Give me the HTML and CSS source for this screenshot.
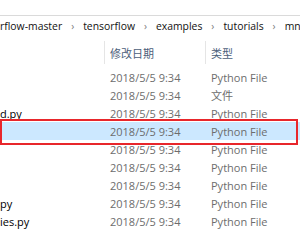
FILE: index.html
```html
<!DOCTYPE html>
<html lang="zh-CN">
<head>
<meta charset="utf-8">
<link rel="stylesheet" href="styles.css">
</head>
<body>
<div class="window">
  <div class="ribbon"></div>
  <div class="address">
    <span class="crumb first">rflow-master</span>
    <span class="chev">›</span>
    <span class="crumb">tensorflow</span>
    <span class="chev">›</span>
    <span class="crumb">examples</span>
    <span class="chev">›</span>
    <span class="crumb">tutorials</span>
    <span class="chev">›</span>
    <span class="crumb">mnist</span>
  </div>
  <div class="list-header">
    <div class="hcell name"></div>
    <div class="hcell">修改日期</div>
    <div class="hcell">类型</div>
  </div>
  <div class="rows">
    <div class="row"><span class="name"></span><span class="date">2018/5/5 9:34</span><span class="type">Python File</span></div>
    <div class="row"><span class="name"></span><span class="date">2018/5/5 9:34</span><span class="type">文件</span></div>
    <div class="row"><span class="name">d.py</span><span class="date">2018/5/5 9:34</span><span class="type">Python File</span></div>
    <div class="row selected"><span class="name"></span><span class="date">2018/5/5 9:34</span><span class="type">Python File</span></div>
    <div class="row"><span class="name"></span><span class="date">2018/5/5 9:34</span><span class="type">Python File</span></div>
    <div class="row"><span class="name"></span><span class="date">2018/5/5 9:34</span><span class="type">Python File</span></div>
    <div class="row"><span class="name"></span><span class="date">2018/5/5 9:34</span><span class="type">Python File</span></div>
    <div class="row"><span class="name">py</span><span class="date">2018/5/5 9:34</span><span class="type">Python File</span></div>
    <div class="row"><span class="name">ies.py</span><span class="date">2018/5/5 9:34</span><span class="type">Python File</span></div>
  </div>
  <div class="mark"></div>
</div>
</body>
</html>
```

FILE: styles.css
```css
html, body {
  margin: 0;
  padding: 0;
  background: #ffffff;
}
.window {
  position: relative;
  width: 300px;
  height: 251px;
  overflow: hidden;
  font-family: "Open Sans", "Noto Sans CJK SC", sans-serif;
  font-size: 11px;
}
.ribbon {
  height: 15px;
}
.address {
  border-top: 1px solid #dadada;
  height: 20px;
  display: flex;
  align-items: center;
  white-space: nowrap;
  color: #111111;
  font-size: 10.4px;
}
.crumb {
  flex-shrink: 0;
}
.chev {
  flex-shrink: 0;
  color: #7a7a7a;
  font-size: 10px;
  width: 21px;
  text-align: center;
}
.list-header {
  margin-top: 5px;
  height: 23px;
  display: grid;
  grid-template-columns: 104px 101px 95px;
}
.hcell {
  border-left: 1px solid #e5e5e5;
  color: #4c607a;
  padding-left: 5px;
  display: flex;
  align-items: center;
  white-space: nowrap;
}
.hcell.name {
  border-left: none;
}
.rows {
  margin-top: 4px;
}
.row {
  height: 18px;
  display: grid;
  grid-template-columns: 105px 101px 94px;
  align-items: center;
  white-space: nowrap;
}
.row.selected {
  background: #cce8ff;
}
.row .name {
  color: #000000;
}
.row .date {
  color: #6d6d6d;
  padding-left: 5px;
}
.row .type {
  color: #6d6d6d;
  padding-left: 5px;
}
.mark {
  position: absolute;
  left: 0;
  top: 119px;
  width: 294px;
  height: 22px;
  border: 2px solid #e8262b;
}
```
